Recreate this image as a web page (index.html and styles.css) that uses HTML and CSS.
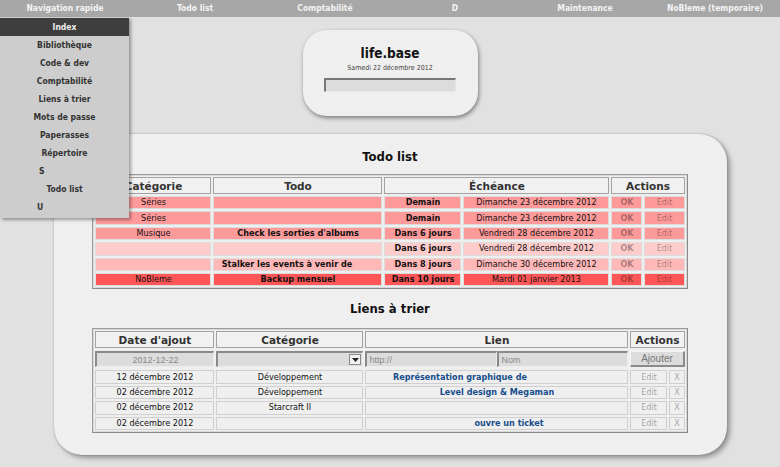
FILE: index.html
```html
<!DOCTYPE html>
<html lang="fr">
<head>
<meta charset="utf-8">
<title>life.base</title>
<link rel="stylesheet" href="styles.css">
</head>
<body>
<nav class="topnav">
  <a>Navigation rapide</a>
  <a>Todo list</a>
  <a>Comptabilité</a>
  <a>D</a>
  <a>Maintenance</a>
  <a>NoBleme (temporaire)</a>
</nav>

<ul class="menu">
  <li class="active">Index</li>
  <li>Bibliothèque</li>
  <li>Code &amp; dev</li>
  <li>Comptabilité</li>
  <li>Liens à trier</li>
  <li>Mots de passe</li>
  <li>Paperasses</li>
  <li>Répertoire</li>
  <li class="sub">S</li>
  <li>Todo list</li>
  <li class="sub u">U</li>
</ul>

<header class="card">
  <h1>life.base</h1>
  <div class="today">Samedi 22 décembre 2012</div>
  <input class="search" type="text">
</header>

<main class="panel">
  <h2>Todo list</h2>
  <table class="grid todo">
    <colgroup>
      <col class="c1"><col class="c2"><col class="c3"><col class="c4"><col class="c5"><col class="c6">
    </colgroup>
    <thead>
      <tr><th>Catégorie</th><th>Todo</th><th colspan="2">Échéance</th><th colspan="2">Actions</th></tr>
    </thead>
    <tbody>
      <tr class="p2"><td>Séries</td><td></td><td class="b">Demain</td><td>Dimanche 23 décembre 2012</td><td class="act b">OK</td><td class="act">Edit</td></tr>
      <tr class="p2"><td>Séries</td><td></td><td class="b">Demain</td><td>Dimanche 23 décembre 2012</td><td class="act b">OK</td><td class="act">Edit</td></tr>
      <tr class="p2"><td>Musique</td><td class="b">Check les sorties d'albums</td><td class="b">Dans 6 jours</td><td>Vendredi 28 décembre 2012</td><td class="act b">OK</td><td class="act">Edit</td></tr>
      <tr class="p4"><td></td><td></td><td class="b">Dans 6 jours</td><td>Vendredi 28 décembre 2012</td><td class="act b">OK</td><td class="act">Edit</td></tr>
      <tr class="p3"><td></td><td class="b">Stalker les events à venir de<span class="tail t22"></span></td><td class="b">Dans 8 jours</td><td>Dimanche 30 décembre 2012</td><td class="act b">OK</td><td class="act">Edit</td></tr>
      <tr class="p1"><td>NoBleme</td><td class="b">Backup mensuel</td><td class="b">Dans 10 jours</td><td>Mardi 01 janvier 2013</td><td class="act b">OK</td><td class="act">Edit</td></tr>
    </tbody>
  </table>

  <h2 class="second">Liens à trier</h2>
  <table class="grid liens">
    <colgroup>
      <col class="l1"><col class="l2"><col class="l3"><col class="l4"><col class="l5">
    </colgroup>
    <thead>
      <tr><th>Date d'ajout</th><th>Catégorie</th><th>Lien</th><th colspan="2">Actions</th></tr>
    </thead>
    <tbody>
      <tr class="form">
        <td><input class="field date" type="text" value="2012-12-22"></td>
        <td><div class="select"><span class="arrow"><svg width="7" height="4" viewBox="0 0 7 4"><path d="M0 0h7L3.5 4z" fill="#222"/></svg></span></div></td>
        <td><div class="pair"><input class="field" type="text" placeholder="http://"><input class="field" type="text" placeholder="Nom"></div></td>
        <td colspan="2"><button class="add" type="button">Ajouter</button></td>
      </tr>
      <tr><td>12 décembre 2012</td><td>Développement</td><td class="link">Représentation graphique de<span class="tail t74"></span></td><td class="act">Edit</td><td class="act">X</td></tr>
      <tr><td>02 décembre 2012</td><td>Développement</td><td class="link">Level design &amp; Megaman</td><td class="act">Edit</td><td class="act">X</td></tr>
      <tr><td>02 décembre 2012</td><td>Starcraft II</td><td class="link"></td><td class="act">Edit</td><td class="act">X</td></tr>
      <tr><td>02 décembre 2012</td><td></td><td class="link"><span class="tail t24"></span>ouvre un ticket</td><td class="act">Edit</td><td class="act">X</td></tr>
    </tbody>
  </table>
</main>
</body>
</html>
```

FILE: styles.css
```css
* { box-sizing: border-box; }

html, body {
  margin: 0;
  padding: 0;
}

body {
  background: #e1e1e1;
  font-family: "DejaVu Sans Condensed", "DejaVu Sans", sans-serif;
  font-size: 9px;
  color: #111;
  height: 467px;
  overflow: hidden;
}

.topnav {
  display: grid;
  grid-template-columns: repeat(6, 130px);
  height: 17px;
  background: #a7a7a7;
}

.topnav a {
  text-align: center;
  line-height: 17px;
  color: #f4f4f4;
  font-weight: bold;
  font-size: 8.5px;
}

.menu {
  position: absolute;
  top: 17px;
  left: 0;
  width: 129px;
  margin: 0;
  padding: 1px 0 2px;
  list-style: none;
  background: #cdcdcd;
  box-shadow: 2px 2px 3px rgba(0,0,0,0.35);
  z-index: 5;
}

.menu li {
  height: 18px;
  line-height: 19px;
  text-align: center;
  font-weight: bold;
  color: #333;
  font-size: 8.5px;
}

.menu li.active {
  background: #3e3e3e;
  color: #eee;
}

.menu li.sub {
  text-align: left;
  padding-left: 39px;
}

.menu li.u { padding-left: 37px; }

.card {
  width: 175px;
  height: 86px;
  margin: 13px auto 0;
  background: #efefef;
  border-radius: 24px;
  box-shadow: 1px 2px 4px rgba(0,0,0,0.45);
  display: flex;
  flex-direction: column;
  align-items: center;
  padding-top: 16px;
}

.card h1 {
  margin: 0;
  font-size: 13.5px;
  line-height: 15px;
  font-weight: bold;
  color: #111;
}

.card .today {
  font-size: 7px;
  color: #444;
  margin-top: 3px;
  line-height: 9px;
}

.card .search {
  width: 132px;
  height: 14px;
  margin-top: 5px;
  border: 1px solid #9a9a9a;
  border-left-width: 2px;
  border-top-width: 2px;
  border-left-color: #777;
  border-top-color: #777;
  border-right-color: #e6e6e6;
  border-bottom-color: #e6e6e6;
  background: #dcdcdc;
  padding: 0;
}

.panel {
  width: 673px;
  margin: 18px auto 0;
  padding: 13px 0 22px;
  background: #efefef;
  border-radius: 28px;
  box-shadow: 3px 3px 5px rgba(0,0,0,0.35), 0 0 2px rgba(0,0,0,0.25);
  display: flex;
  flex-direction: column;
  align-items: center;
}

.panel h2 {
  margin: 0;
  font-size: 13px;
  line-height: 20px;
  font-weight: bold;
  color: #111;
}

.panel h2 + table { margin-top: 7px; }
.panel h2.second + table { margin-top: 9px; }
.panel table + h2 { margin-top: 10px; }

.grid {
  width: 595px;
  table-layout: fixed;
  border-collapse: separate;
  border-spacing: 2px;
  border: 1px solid #9c9c9c;
  border-right-color: #8a8a8a;
  border-bottom-color: #8a8a8a;
  background: #efefef;
  box-shadow: inset 0 0 0 1px #d8d8d8;
}

.grid th {
  height: 17px;
  padding: 0;
  background: #f1f1f1;
  border: 1px solid #a3a3a3;
  font-family: "DejaVu Sans", sans-serif;
  font-size: 10.5px;
  font-weight: bold;
  color: #333;
  line-height: 14px;
}

.grid td {
  height: 13.4px;
  padding: 0;
  border: 1px solid #cfcfcf;
  text-align: center;
  font-size: 9px;
  line-height: 11px;
  white-space: nowrap;
  overflow: hidden;
}

.grid td.b { font-weight: bold; }

.grid td.act {
  color: rgba(0,0,0,0.35);
}

.tail {
  display: inline-block;
  height: 1px;
}
.tail.t22 { width: 22px; }
.tail.t24 { width: 24px; }
.tail.t74 { width: 74px; }

.todo col.c1 { width: 116px; }
.todo col.c2 { width: 169px; }
.todo col.c3 { width: 77px; }
.todo col.c4 { width: 146px; }
.todo col.c5 { width: 31px; }
.todo col.c6 { width: 40px; }

.todo tr.p1 td { background: #ff5757; }
.todo tr.p2 td { background: #ff9a9a; }
.todo tr.p3 td { background: #ffb8b8; }
.todo tr.p4 td { background: #ffcccc; }

.todo td { border-color: #dcdcdc; }

.liens col.l1 { width: 119px; }
.liens col.l2 { width: 147px; }
.liens col.l3 { width: 263px; }
.liens col.l4 { width: 37px; }
.liens col.l5 { width: 15px; }

.liens td { background: #efefef; color: #111; }

.liens td.link {
  font-weight: bold;
  color: #174d8b;
}

.liens tr.form td {
  height: 18px;
  border: 0;
  padding: 0;
}

.field {
  display: block;
  width: 100%;
  height: 16px;
  margin: 0;
  padding: 0 2px;
  background: #dcdcdc;
  border: 1px solid #ececec;
  border-left: 2px solid #8a8a8a;
  border-top: 2px solid #8a8a8a;
  font-family: "Liberation Sans", sans-serif;
  font-size: 9px;
  color: #888;
}

.field::placeholder { color: #8a8a8a; }

.field.date { text-align: center; }

.select {
  height: 16px;
  background: #dcdcdc;
  border-left: 2px solid #8a8a8a;
  border-top: 2px solid #8a8a8a;
  border-right: 1px solid #ececec;
  border-bottom: 1px solid #ececec;
  display: flex;
  justify-content: flex-end;
  align-items: center;
  padding-right: 1px;
}

.arrow {
  width: 12px;
  height: 11px;
  background: #f0f0f0;
  border: 1px solid #8a8a8a;
  display: flex;
  align-items: center;
  justify-content: center;
}

.pair {
  display: grid;
  grid-template-columns: 132px 1fr;
}

.pair .field { text-align: left; }

.add {
  display: block;
  width: 100%;
  height: 16px;
  margin: 0;
  padding: 0;
  background: #dcdcdc;
  border: 1px solid #f4f4f4;
  border-right: 2px solid #8a8a8a;
  border-bottom: 2px solid #8a8a8a;
  font-family: "Liberation Sans", sans-serif;
  font-size: 10px;
  color: #777;
}
```
